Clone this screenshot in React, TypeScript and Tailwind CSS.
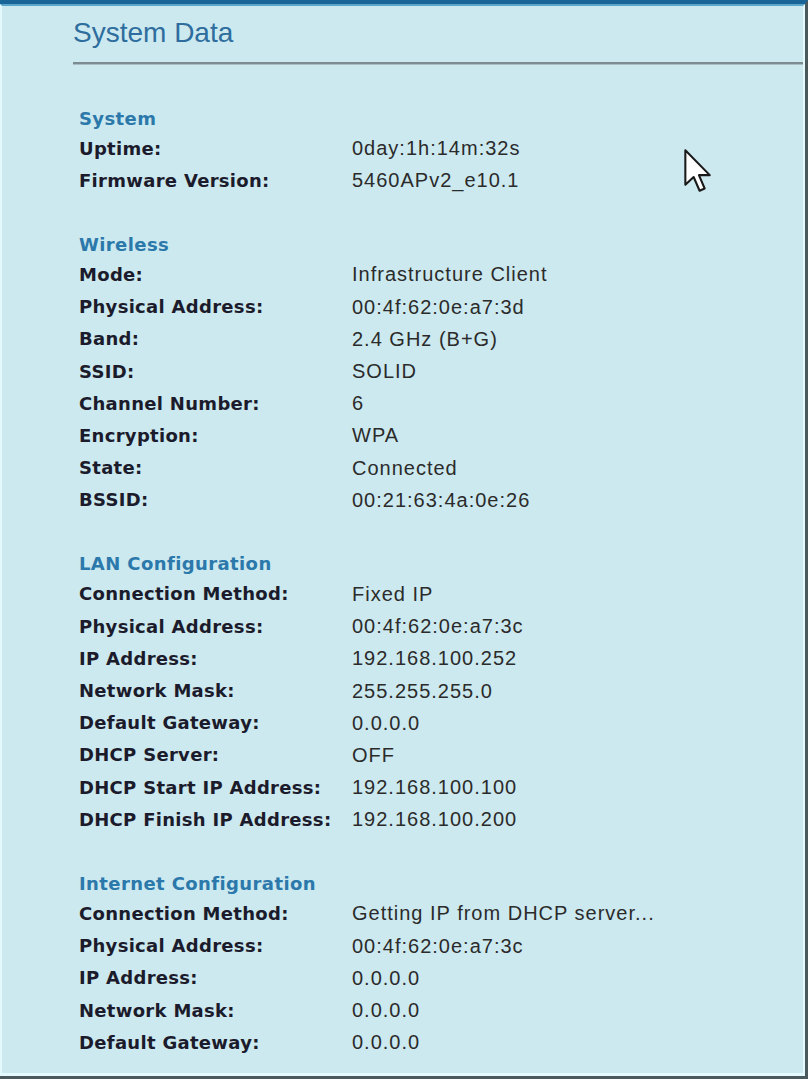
import React from 'react';

type Row = [string, string];

interface Section {
  title: string;
  rows: Row[];
}

const sections: Section[] = [
  {
    title: 'System',
    rows: [
      ['Uptime:', '0day:1h:14m:32s'],
      ['Firmware Version:', '5460APv2_e10.1'],
    ],
  },
  {
    title: 'Wireless',
    rows: [
      ['Mode:', 'Infrastructure Client'],
      ['Physical Address:', '00:4f:62:0e:a7:3d'],
      ['Band:', '2.4 GHz (B+G)'],
      ['SSID:', 'SOLID'],
      ['Channel Number:', '6'],
      ['Encryption:', 'WPA'],
      ['State:', 'Connected'],
      ['BSSID:', '00:21:63:4a:0e:26'],
    ],
  },
  {
    title: 'LAN Configuration',
    rows: [
      ['Connection Method:', 'Fixed IP'],
      ['Physical Address:', '00:4f:62:0e:a7:3c'],
      ['IP Address:', '192.168.100.252'],
      ['Network Mask:', '255.255.255.0'],
      ['Default Gateway:', '0.0.0.0'],
      ['DHCP Server:', 'OFF'],
      ['DHCP Start IP Address:', '192.168.100.100'],
      ['DHCP Finish IP Address:', '192.168.100.200'],
    ],
  },
  {
    title: 'Internet Configuration',
    rows: [
      ['Connection Method:', 'Getting IP from DHCP server...'],
      ['Physical Address:', '00:4f:62:0e:a7:3c'],
      ['IP Address:', '0.0.0.0'],
      ['Network Mask:', '0.0.0.0'],
      ['Default Gateway:', '0.0.0.0'],
    ],
  },
];

// mouse pointer sitting over the panel in the screenshot
const Cursor: React.FC = () => (
  <svg
    className="absolute left-[681px] top-[142px]"
    width="30"
    height="46"
    viewBox="0 0 13 20"
  >
    <path
      d="M1 1 L1 16 L4.6 12.6 L7.2 18.6 L9.4 17.6 L6.9 11.8 L11.6 11.8 Z"
      fill="#ffffff"
      stroke="#1a1a1a"
      strokeWidth="0.9"
      strokeLinejoin="round"
    />
  </svg>
);

const App: React.FC = () => {
  return (
    <div className="w-[808px] h-[1079px] border-t-4 border-t-[#1a6597] border-r-[3px] border-r-[#4b595d] border-b-[3px] border-b-[#4b595d] bg-[#cce9ef]">
      <div className="relative h-full border-t-2 border-t-[#5ba5cc] border-l-2 border-l-[#e3f9fd] border-r-2 border-r-[#e3f9fd] border-b-[3px] border-b-[#e3f9fd] pl-[71px]">
        <h1 className="pt-[11px] leading-[32px] text-[28px] text-[#2e6d9d] font-['Liberation_Sans',sans-serif]">
          System Data
        </h1>
        <div className="mt-[13px] h-[3px] bg-[#7d8c91] border-b border-b-[#a9bdc2]" />

        <div className="pl-[6px] pt-[39px]">
          {sections.map((section, i) => (
            <div key={section.title} className={i > 0 ? 'mt-[34px]' : ''}>
              <div className="h-[28px] flex items-center text-[18px] font-bold tracking-[0.4px] text-[#2b78ab] font-['DejaVu_Sans',sans-serif]">
                {section.title}
              </div>
              {section.rows.map(([label, value]) => (
                <div key={label} className="h-[32.2px] grid grid-cols-[273px_1fr] items-center">
                  <span className="text-[18px] font-bold tracking-[0.3px] text-[#1b1b2c] font-['DejaVu_Sans',sans-serif]">
                    {label}
                  </span>
                  <span className="text-[20px] tracking-[1px] text-[#2b2b2b] font-['Liberation_Sans',sans-serif]">
                    {value}
                  </span>
                </div>
              ))}
            </div>
          ))}
        </div>

        <Cursor />
      </div>
    </div>
  );
};

export default App;
